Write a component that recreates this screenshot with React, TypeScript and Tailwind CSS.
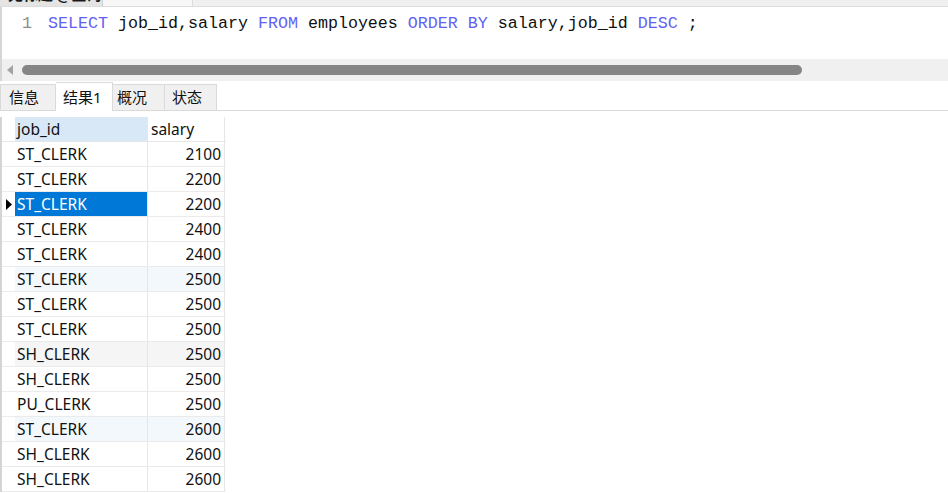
import React from "react";

const rows: [string, string, string?][] = [
  ["ST_CLERK", "2100"],
  ["ST_CLERK", "2200"],
  ["ST_CLERK", "2200", "sel"],
  ["ST_CLERK", "2400"],
  ["ST_CLERK", "2400"],
  ["ST_CLERK", "2500", "blue"],
  ["ST_CLERK", "2500"],
  ["ST_CLERK", "2500"],
  ["SH_CLERK", "2500", "gray"],
  ["SH_CLERK", "2500"],
  ["PU_CLERK", "2500"],
  ["ST_CLERK", "2600", "blue"],
  ["SH_CLERK", "2600"],
  ["SH_CLERK", "2600"],
];

const KW = ({ children }: { children: React.ReactNode }) => (
  <span className="text-[#6262f2]">{children}</span>
);

export default function App() {
  const ui = { fontFamily: '"Noto Sans", "Noto Sans CJK SC", sans-serif' };
  return (
    <div className="w-[948px] h-[493px] overflow-hidden bg-white flex flex-col" style={ui}>
      {/* top cut-off tab strip */}
      <div className="h-[7px] flex bg-[#f0f0f0] border-b border-[#dcdcdc] overflow-hidden shrink-0">
        <div className="w-[103px] bg-[#e4e4e4] border-r border-[#cfcfcf] overflow-hidden pl-[8px]">
          <div className="-mt-[16px] text-[15px] leading-[20px] text-[#1a1a1a] font-bold" style={{ fontFamily: '"Noto Sans CJK SC", sans-serif' }}>
            无标题 @查询
          </div>
        </div>
        <div className="w-[90px] bg-[#f7f7f7] border-r border-[#dcdcdc]" />
        <div className="flex-1 bg-[#f0f0f0]" />
      </div>

      {/* editor */}
      <div className="h-[52px] flex border-l-2 border-[#d6d6d6] shrink-0">
        <div className="w-[46px] pt-[7px] pr-[16px] text-right text-[16.67px] leading-[20px] text-[#8c8c8c]" style={{ fontFamily: '"Liberation Mono", monospace' }}>
          1
        </div>
        <div className="pt-[7px] text-[16.67px] leading-[20px] text-[#101010] whitespace-pre" style={{ fontFamily: '"Liberation Mono", monospace' }}>
          <KW>SELECT</KW> job_id,salary <KW>FROM</KW> employees <KW>ORDER</KW> <KW>BY</KW> salary,job_id <KW>DESC</KW> ;
        </div>
      </div>

      {/* horizontal scrollbar */}
      <div className="h-[22px] bg-[#f0f0f0] flex items-center shrink-0 border-l-2 border-[#d6d6d6]">
        <svg width="20" height="22" viewBox="0 0 20 22" className="shrink-0">
          <polygon points="5,11 11,6 11,16" fill="#a3a3a3" />
        </svg>
        <div className="w-[780px] h-[10px] rounded-full bg-[#858585]" />
      </div>

      {/* tabs */}
      <div className="h-[30px] flex items-end border-b border-[#dadada] shrink-0 pt-[2px]">
        <div className="w-[56px] h-[26px] bg-[#f0f0f0] border border-b-0 border-[#dadada] flex items-center pl-[8px] text-[15px] text-[#111]">
          信息
        </div>
        <div className="w-[57px] h-[29px] bg-white border-t border-r border-[#dadada] flex items-start pt-[3px] pl-[7px] text-[15px] text-[#111] -mb-px">
          结果1
        </div>
        <div className="w-[52px] h-[26px] bg-[#f0f0f0] border-t border-r border-[#dadada] flex items-center pl-[4px] text-[15px] text-[#111]">
          概况
        </div>
        <div className="w-[52px] h-[26px] bg-[#f0f0f0] border-t border-r border-[#dadada] flex items-center pl-[7px] text-[15px] text-[#111]">
          状态
        </div>
      </div>

      {/* grid */}
      <div className="pt-[6px] flex-1">
        <div className="w-[226px] border-l-2 border-[#d4d4d4]">
          <div className="flex h-[25px] border-b border-[#e6e6e6]">
            <div className="w-[13px]" />
            <div className="w-[133px] bg-[#d9e8f7] border-r border-[#e6e6e6] pl-[2px] text-[15.5px] leading-[25px] text-[#111]">
              job_id
            </div>
            <div className="w-[77px] border-r border-[#e6e6e6] pl-[3px] text-[15.5px] leading-[25px] text-[#111]">
              salary
            </div>
          </div>
          {rows.map(([job, sal, kind], i) => {
            const bg = kind === "blue" ? "bg-[#f3f8fd]" : kind === "gray" ? "bg-[#f5f5f5]" : "bg-white";
            return (
              <div key={i} className="flex h-[25px] border-b border-[#ebebeb]">
                <div className="w-[13px] flex items-center justify-center">
                  {kind === "sel" && (
                    <svg width="6" height="11" viewBox="0 0 6 11">
                      <polygon points="0,0 6,5.5 0,11" fill="#000" />
                    </svg>
                  )}
                </div>
                <div
                  className={`w-[133px] border-r border-[#e6e6e6] pl-[2px] text-[15.5px] leading-[24px] ${
                    kind === "sel" ? "bg-[#0078d7] text-white" : `${bg} text-[#111]`
                  }`}
                >
                  {job}
                </div>
                <div className={`w-[77px] border-r border-[#e6e6e6] pr-[3px] text-right text-[15.5px] leading-[24px] text-[#111] ${kind === "sel" ? "bg-white" : bg}`}>
                  {sal}
                </div>
              </div>
            );
          })}
        </div>
      </div>
    </div>
  );
}
